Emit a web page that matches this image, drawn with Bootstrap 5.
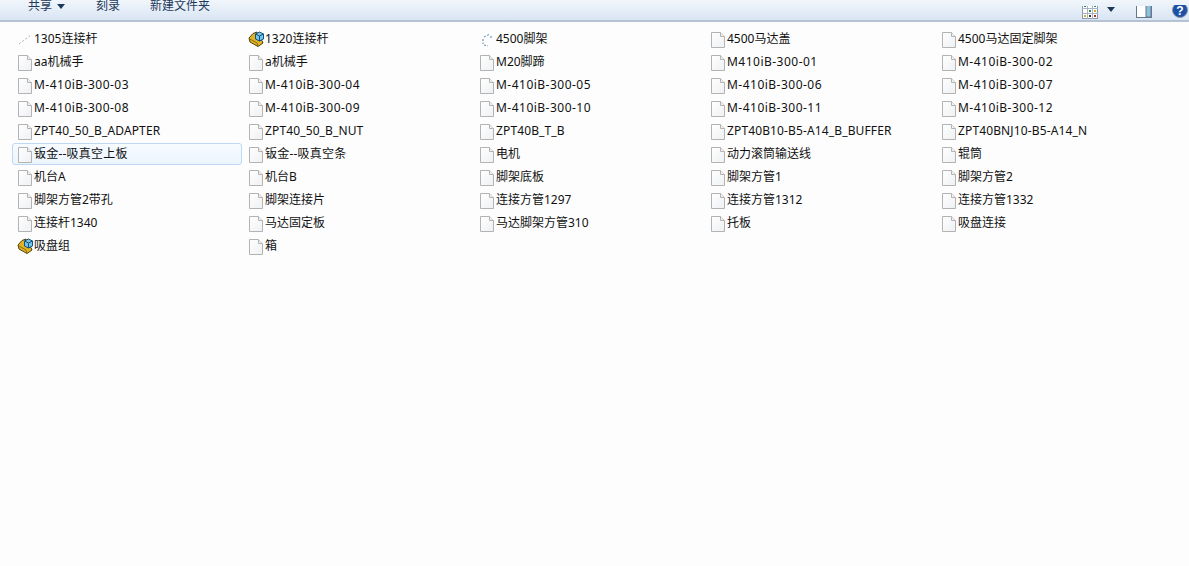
<!DOCTYPE html>
<html lang="zh">
<head>
<meta charset="utf-8">
<title>Explorer</title>
<link href="https://cdn.jsdelivr.net/npm/bootstrap@5.3.0/dist/css/bootstrap.min.css" rel="stylesheet">
<style>
html,body{height:100%;overflow:hidden}
body{background:#fdfdfd;font-family:"Noto Sans","Noto Sans CJK SC",sans-serif;font-size:12px;color:#111}
.tb{height:22px;overflow:hidden;background:linear-gradient(#f1f6fb,#d9e5f4);border-bottom:2px solid #b4c2d4;color:#1e395b;padding-left:28px;padding-bottom:7px}
.tb-t{line-height:14px;white-space:nowrap}
.tb-a{margin-left:5px;width:0;height:0;border:4.5px solid transparent;border-top:5px solid #1e395b;border-bottom:0;margin-bottom:4px}
.s1{margin-left:31px}
.s2{margin-left:30px}
.tb-r{padding-right:1px;margin-bottom:-7px}
.files{display:grid;grid-template-columns:repeat(5,231px);grid-auto-rows:23px;padding:6px 0 0 12px}
.it{display:flex;align-items:center;gap:1px;height:22px;padding-left:4px;border:1px solid transparent;border-radius:3px;width:230px;white-space:nowrap}
.it svg{flex:none;width:16px;height:18px}
.sel{background:linear-gradient(#f6fbff,#ecf4fe);border-color:#bcd8f5}
.wd{letter-spacing:.48px}
.wh{letter-spacing:.22px}
.wz{letter-spacing:.13px}
</style>
</head>
<body>
<svg width="0" height="0" class="position-absolute">
<defs><linearGradient id="pg" x1="0" y1="0" x2="1" y2="1"><stop offset="0" stop-color="#fff"/><stop offset="1" stop-color="#eef0f3"/></linearGradient></defs>
<symbol id="doc" viewBox="0 0 16 18"><path d="M1.500 2.500H10.500L14.500 6.500V17.500H1.500Z" fill="url(#pg)" stroke="#b3b3b3"/><path d="M10.500 2.500V6.500H14.500" fill="#f2f2f2" stroke="#b3b3b3"/></symbol>
<symbol id="part" viewBox="0 0 16 18"><path d="M1 8 5 3.500 9 2 10 9 14 10.500 15 13 10 16.500 2 12Z" fill="#e2b421" stroke="#4e3f12"/><path d="M2 9 9 13 10 16" fill="none" stroke="#8a6d14"/><path d="M7.500 4 11.500 2 15.500 4V9L11.500 11 7.500 9Z" fill="#6fc6ea" stroke="#174f78"/><path d="M7.500 4 11.500 6 15.500 4M11.500 6V11" fill="none" stroke="#174f78"/></symbol>
<symbol id="sk1" viewBox="0 0 16 18"><path d="M2 14 14 5" fill="none" stroke="#999" stroke-width=".8" stroke-dasharray="2 2"/></symbol>
<symbol id="sk2" viewBox="0 0 16 18"><path d="M5 7 11 4M4 9V14M5 15 9 16M12 6V9" fill="none" stroke="#5580a8" stroke-dasharray="2 1.500"/></symbol>
</svg>
<div class="tb d-flex align-items-end">
<span class="tb-t">共享</span><span class="tb-a"></span>
<span class="tb-t s1">刻录</span>
<span class="tb-t s2">新建文件夹</span>
<div class="ms-auto d-flex align-items-end tb-r">
<svg width="16" height="14" viewBox="0 0 16 14"><rect x=".5" y="-3.500" width="15" height="16" fill="#fff" stroke="#8c99a8"/><path d="M5.500-3V13M10.500-3V13M0 2.500H16M0 7.500H16" stroke="#aab4c0"/><path d="M2 0h2v1H2zM12 0h2v1h-2zM7 4h2v2H7z" fill="#2a8a6a"/><path d="M2 9h2v2H2zM12 4h2v2h-2z" fill="#c8b030"/><path d="M12 9h2v2h-2z" fill="#b03020"/><path d="M7 9h2v2H7z" fill="#334"/></svg>
<span class="tb-a" style="margin-left:9px;margin-bottom:8px"></span>
<svg width="16" height="14" viewBox="0 0 16 14" style="margin-left:21px"><rect x=".5" y="-3" width="15" height="14.500" fill="#fff" stroke="#66788c"/><rect x="10" y="-3" width="5" height="14" fill="#8fc0de" stroke="#66788c"/></svg>
<svg width="16" height="15" viewBox="0 0 16 15" style="margin-left:20px"><circle cx="8" cy="5" r="7.500" fill="#1c4fa8" stroke="#8a94a4"/><text x="8" y="10" font-size="12" font-weight="700" fill="#fff" text-anchor="middle" font-family="Liberation Sans">?</text></svg>
</div>
</div>
<div class="files">
<div class="it"><svg><use href="#sk1"/></svg>1305连接杆</div>
<div class="it"><svg><use href="#part"/></svg>1320连接杆</div>
<div class="it"><svg><use href="#sk2"/></svg>4500脚架</div>
<div class="it"><svg><use href="#doc"/></svg>4500马达盖</div>
<div class="it"><svg><use href="#doc"/></svg>4500马达固定脚架</div>
<div class="it"><svg><use href="#doc"/></svg>aa机械手</div>
<div class="it"><svg><use href="#doc"/></svg>a机械手</div>
<div class="it"><svg><use href="#doc"/></svg>M20脚蹄</div>
<div class="it wd"><svg><use href="#doc"/></svg>M410iB-300-01</div>
<div class="it wd"><svg><use href="#doc"/></svg>M-410iB-300-02</div>
<div class="it wd"><svg><use href="#doc"/></svg>M-410iB-300-03</div>
<div class="it wd"><svg><use href="#doc"/></svg>M-410iB-300-04</div>
<div class="it wd"><svg><use href="#doc"/></svg>M-410iB-300-05</div>
<div class="it wd"><svg><use href="#doc"/></svg>M-410iB-300-06</div>
<div class="it wd"><svg><use href="#doc"/></svg>M-410iB-300-07</div>
<div class="it wd"><svg><use href="#doc"/></svg>M-410iB-300-08</div>
<div class="it wd"><svg><use href="#doc"/></svg>M-410iB-300-09</div>
<div class="it wd"><svg><use href="#doc"/></svg>M-410iB-300-10</div>
<div class="it wd"><svg><use href="#doc"/></svg>M-410iB-300-11</div>
<div class="it wd"><svg><use href="#doc"/></svg>M-410iB-300-12</div>
<div class="it wz"><svg><use href="#doc"/></svg>ZPT40_50_B_ADAPTER</div>
<div class="it wz"><svg><use href="#doc"/></svg>ZPT40_50_B_NUT</div>
<div class="it wz"><svg><use href="#doc"/></svg>ZPT40B_T_B</div>
<div class="it wz"><svg><use href="#doc"/></svg>ZPT40B10-B5-A14_B_BUFFER</div>
<div class="it wz"><svg><use href="#doc"/></svg>ZPT40BNJ10-B5-A14_N</div>
<div class="it sel wh"><svg><use href="#doc"/></svg>钣金--吸真空上板</div>
<div class="it wh"><svg><use href="#doc"/></svg>钣金--吸真空条</div>
<div class="it"><svg><use href="#doc"/></svg>电机</div>
<div class="it"><svg><use href="#doc"/></svg>动力滚筒输送线</div>
<div class="it"><svg><use href="#doc"/></svg>辊筒</div>
<div class="it"><svg><use href="#doc"/></svg>机台A</div>
<div class="it"><svg><use href="#doc"/></svg>机台B</div>
<div class="it"><svg><use href="#doc"/></svg>脚架底板</div>
<div class="it"><svg><use href="#doc"/></svg>脚架方管1</div>
<div class="it"><svg><use href="#doc"/></svg>脚架方管2</div>
<div class="it"><svg><use href="#doc"/></svg>脚架方管2带孔</div>
<div class="it"><svg><use href="#doc"/></svg>脚架连接片</div>
<div class="it"><svg><use href="#doc"/></svg>连接方管1297</div>
<div class="it"><svg><use href="#doc"/></svg>连接方管1312</div>
<div class="it"><svg><use href="#doc"/></svg>连接方管1332</div>
<div class="it"><svg><use href="#doc"/></svg>连接杆1340</div>
<div class="it"><svg><use href="#doc"/></svg>马达固定板</div>
<div class="it"><svg><use href="#doc"/></svg>马达脚架方管310</div>
<div class="it"><svg><use href="#doc"/></svg>托板</div>
<div class="it"><svg><use href="#doc"/></svg>吸盘连接</div>
<div class="it"><svg><use href="#part"/></svg>吸盘组</div>
<div class="it"><svg><use href="#doc"/></svg>箱</div>
</div>
<script src="https://cdn.jsdelivr.net/npm/bootstrap@5.3.0/dist/js/bootstrap.bundle.min.js"></script>
</body>
</html>
